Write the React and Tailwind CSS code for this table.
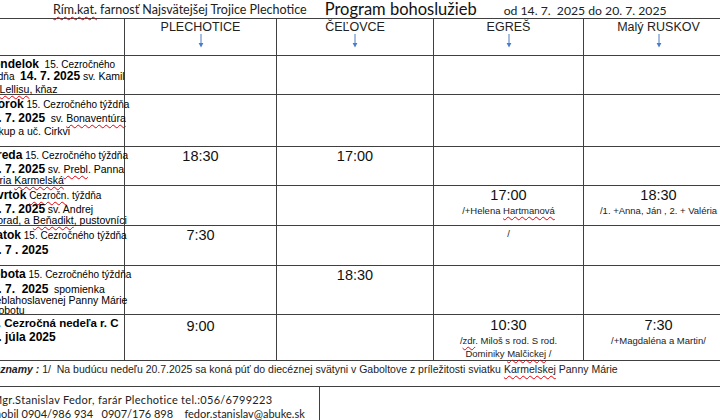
const sq = "underline decoration-wavy decoration-red-600 decoration-1 underline-offset-2";
const line = "border-[#404040]";

function Arrow() {
  return (
    <svg width="8" height="14" viewBox="0 0 8 14" className="mx-auto block">
      <line x1="4" y1="0" x2="4" y2="10" stroke="#4a7cc9" strokeWidth="1" />
      <path d="M1.6 9 L4 13.5 L6.4 9 Z" fill="#4a7cc9" />
    </svg>
  );
}

const widths = ["w-[143px]", "w-[152px]", "w-[157px]", "w-[150px]", "w-[150px]"];

function Row({ h, cells }) {
  return (
    <div className={`flex ${h}`}>
      {cells.map((c, i) => (
        <div
          key={i}
          className={`${widths[i]} shrink-0 border-r border-b ${line} ${
            i === 0 ? "pl-[3px] pt-[1px] whitespace-nowrap" : "text-center whitespace-nowrap"
          }`}
        >
          {c}
        </div>
      ))}
    </div>
  );
}

function Head({ name }) {
  return (
    <div className="pt-[2px]">
      <div className="text-[12.5px] leading-[13px] text-[#222]">{name}</div>
      <Arrow />
    </div>
  );
}

function Time({ t, lines = [], pt = "pt-[1px]" }) {
  return (
    <div className={pt}>
      {t && <div className="text-[14.5px] leading-[17px] text-[#111]">{t}</div>}
      {lines.map((l, i) => (
        <div key={i} className="text-[9.5px] leading-[13px] text-[#222]">
          {l}
        </div>
      ))}
    </div>
  );
}

// a line of the day column; small base font so that the strut does not grow the line
function L({ h, children }) {
  return (
    <div className={`text-[8px] ${h} flex items-end`}>
      <span className="text-[10px] leading-none">{children}</span>
    </div>
  );
}

const B = ({ children, s = "text-[12px]" }) => <b className={s}>{children}</b>;
const S = ({ children }) => <span className="text-[10px]">{children}</span>;
const R = ({ children }) => <span className="text-[10.5px]">{children}</span>;

export default function App() {
  return (
    <div
      className="w-[720px] h-[420px] overflow-hidden bg-white text-black"
      style={{ fontFamily: '"Liberation Sans", Arial, sans-serif' }}
    >
      <div className="ml-[-18px] w-[760px]">
        {/* title */}
        <div className="h-[18px] flex items-end whitespace-nowrap" style={{ fontFamily: "Lato, sans-serif" }}>
          <span className="ml-[71px] text-[12.5px] leading-[16px] text-[#222]">
            <span className={sq}>Rím.kat.</span> farnosť Najsvätejšej Trojice Plechotice
          </span>
          <span className="ml-[18px] text-[16.5px] leading-[18px] text-[#111]">Program bohoslužieb</span>
          <span className="ml-[27px] text-[12.2px] leading-[15px] text-[#222]">
            od 14. 7.&nbsp; 2025 do 20. 7. 2025
          </span>
        </div>

        <div className={`border-t ${line}`}>
          <Row
            h="h-[37px]"
            cells={[
              null,
              <Head name="PLECHOTICE" />,
              <Head name="ČEĽOVCE" />,
              <Head name="EGREŠ" />,
              <Head name="Malý RUSKOV" />,
            ]}
          />

          <Row
            h="h-[39px]"
            cells={[
              <div>
                <L h="h-[13px]">
                  <B>Pondelok</B>&nbsp; <S>15. Cezročného</S>
                </L>
                <L h="h-[12px]">
                  <S>týždňa</S>&nbsp; <B>14. 7. 2025</B> <R>sv. Kamil</R>
                </L>
                <L h="h-[13px]">
                  <R>
                    de <span className={sq}>Lellisu</span>, kňaz
                  </R>
                </L>
              </div>,
              null,
              null,
              null,
              null,
            ]}
          />

          <Row
            h="h-[52px]"
            cells={[
              <div>
                <L h="h-[14px]">
                  <B>Utorok</B> <S>15. Cezročného týždňa</S>
                </L>
                <L h="h-[14px]">
                  <B>15. 7. 2025</B>&nbsp; <R>sv. <span className={sq}>Bonaventúra</span></R>
                </L>
                <L h="h-[13px]">
                  <R>biskup a uč. Cirkvi</R>
                </L>
              </div>,
              null,
              null,
              null,
              null,
            ]}
          />

          <Row
            h="h-[39px]"
            cells={[
              <div>
                <L h="h-[13px]">
                  <B>Streda</B> <S>15. Cezročného týždňa</S>
                </L>
                <L h="h-[14px]">
                  <B>16. 7. 2025</B> <R>sv. <span className={sq}>Prebl</span>. Panna</R>
                </L>
                <L h="h-[11px]">
                  <R>
                    Mária <span className={sq}>Karmelská</span>
                  </R>
                </L>
              </div>,
              <Time t="18:30" />,
              <Time t="17:00" />,
              null,
              null,
            ]}
          />

          <Row
            h="h-[40px]"
            cells={[
              <div>
                <L h="h-[14px]">
                  <B>Štvrtok</B> <S><span className={sq}>Cezročn</span>. týždňa</S>
                </L>
                <L h="h-[14px]">
                  <B>17. 7. 2025</B> <R>sv. Andrej</R>
                </L>
                <L h="h-[11px]">
                  <R>
                    Svorad, a <span className={sq}>Beňadikt</span>, pustovníci
                  </R>
                </L>
              </div>,
              null,
              null,
              <Time
                t="17:00"
                lines={[
                  <>
                    /+Helena <span className={sq}>Hartmanová</span>
                  </>,
                ]}
              />,
              <Time t="18:30" lines={["/1. +Anna, Ján , 2. + Valéria"]} />,
            ]}
          />

          <Row
            h="h-[40px]"
            cells={[
              <div>
                <L h="h-[14px]">
                  <B>Piatok</B> <S>15. Cezročného týždňa</S>
                </L>
                <L h="h-[15px]">
                  <B>18. 7 . 2025</B>
                </L>
              </div>,
              <Time t="7:30" />,
              null,
              <Time lines={["/"]} />,
              null,
            ]}
          />

          <Row
            h="h-[49px]"
            cells={[
              <div>
                <L h="h-[13px]">
                  <B>Sobota</B> <S>15. Cezročného týždňa</S>
                </L>
                <L h="h-[15px]">
                  <B>19. 7.&nbsp; 2025</B>&nbsp; <R>spomienka</R>
                </L>
                <L h="h-[11px]">
                  <R>Preblahoslavenej Panny Márie</R>
                </L>
                <L h="h-[10px]">
                  <R>v sobotu</R>
                </L>
              </div>,
              null,
              <Time t="18:30" />,
              null,
              null,
            ]}
          />

          <Row
            h="h-[46px]"
            cells={[
              <div>
                <L h="h-[13px]">
                  <B s="text-[11.5px]">16. Cezročná nedeľa r. C</B>
                </L>
                <L h="h-[14px]">
                  <B>20. júla 2025</B>
                </L>
              </div>,
              <Time t="9:00" pt="pt-[3px]" />,
              null,
              <Time
                t="10:30"
                pt="pt-[2px]"
                lines={[
                  <>
                    /<span className={sq}>zdr</span>. Miloš s rod. S rod.
                  </>,
                  <>
                    Dominiky <span className={sq}>Malčickej</span> /
                  </>,
                ]}
              />,
              <Time t="7:30" pt="pt-[2px]" lines={["/+Magdaléna a Martin/"]} />,
            ]}
          />
        </div>

        {/* notes */}
        <div className={`h-[26px] border-b ${line} pl-[10px] pt-[1px] text-[10.5px] leading-[14px] text-[#222] whitespace-pre`}>
          <b className="italic">Oznamy :</b> 1/  Na budúcu nedeľu 20.7.2025 sa koná púť do diecéznej svätyni v Gaboltove z príležitosti sviatku{" "}
          <span className={sq}>Karmelskej</span> Panny Márie
        </div>

        {/* footer */}
        <div className="flex">
          <div
            className={`w-[338px] h-[40px] border-r ${line} pl-[10px] pt-[6px] text-[11px] leading-[14px] text-[#222] whitespace-pre`}
            style={{ fontFamily: "Lato, sans-serif" }}
          >
            <div className="tracking-[0.3px]">Mgr.Stanislav Fedor, farár Plechotice tel.:056/6799223</div>
            <div>mobil 0904/986 934   0907/176 898    fedor.stanislav@abuke.sk</div>
          </div>
        </div>
      </div>
    </div>
  );
}
